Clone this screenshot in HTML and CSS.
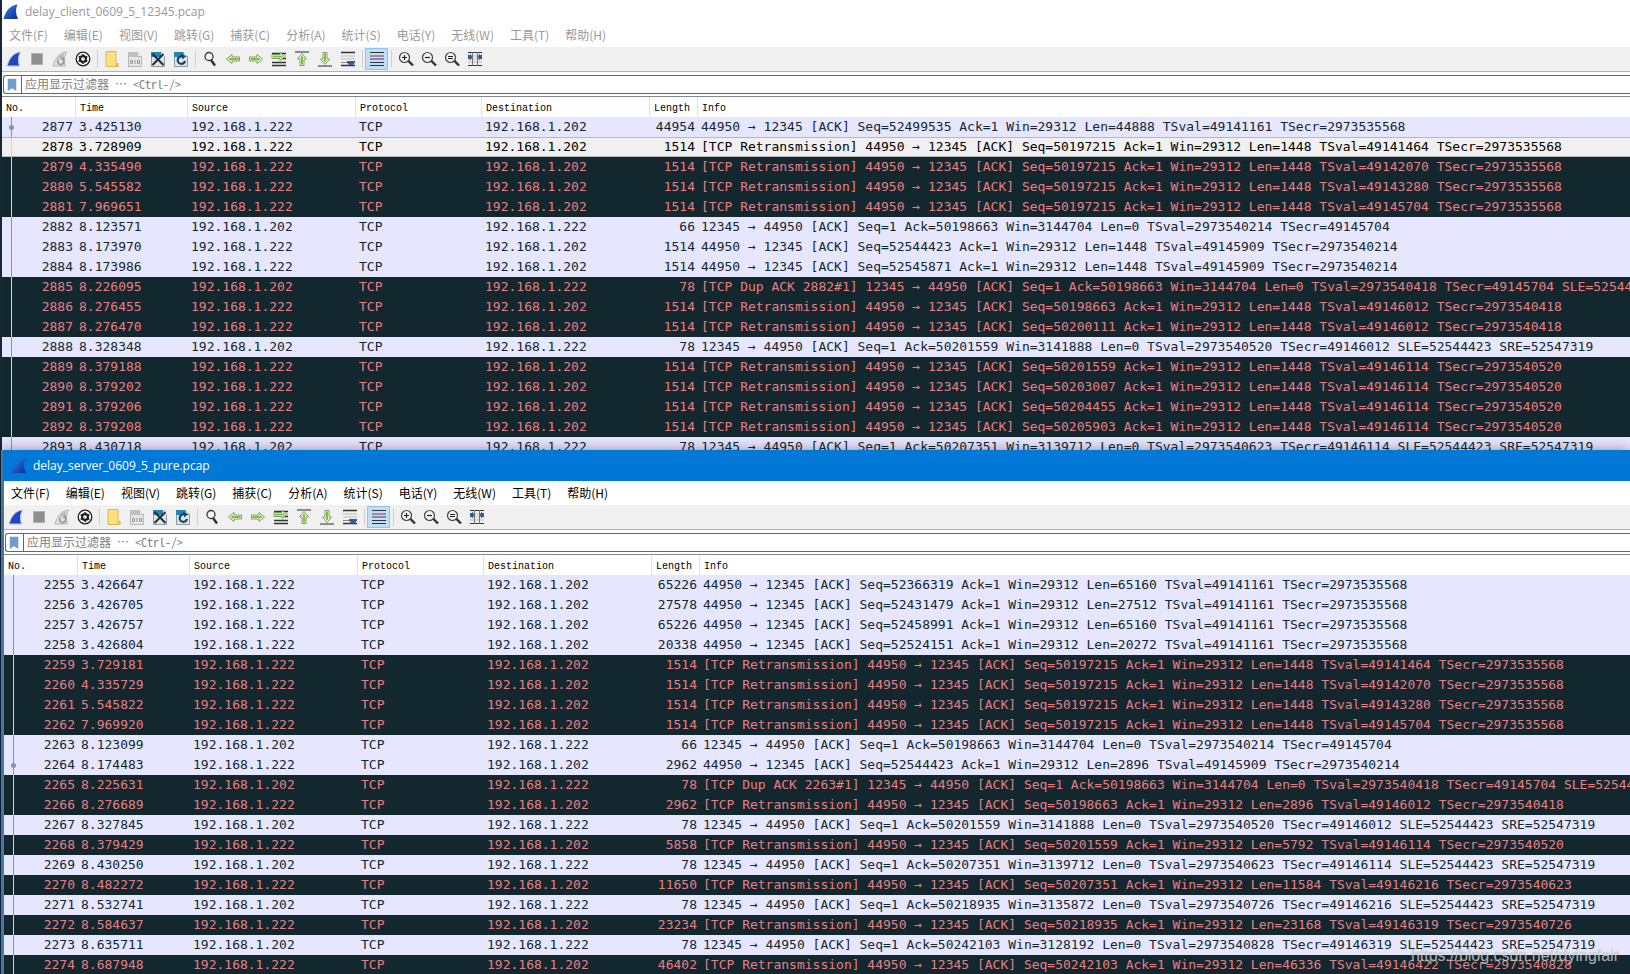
FILE: index.html
```html
<!DOCTYPE html>
<html lang="zh-CN">

<head>
    <meta charset="UTF-8">
    <meta name="viewport" content="width=device-width, initial-scale=1.0">
    <title>delay_server_0609_5_pure.pcap</title>
    <link rel="stylesheet" href="styles.css">
</head>

<body>
    <svg class="sprite" aria-hidden="true">
        <defs>
            <linearGradient id="fin-blue" x1="0" y1="0" x2="1" y2="1">
                <stop offset="0" stop-color="#5d9be8" />
                <stop offset="0.5" stop-color="#1c56c4" />
                <stop offset="1" stop-color="#0b2f8c" />
            </linearGradient>
        </defs>
        <symbol id="i-logo" viewBox="0 0 16 16"><path d="M0.5 15C3 6 7 1.500 14.500 0.500C12.300 5 12.500 10 15 15Z" fill="url(#fin-blue)" /></symbol>
        <symbol id="i-start" viewBox="0 0 16 16"><path d="M1 15C3.500 7 7 2 14.500 1C12 6 12 10 13.500 15Z" fill="#2146bd" stroke="#bcc6e6" stroke-width="1" /></symbol>
        <symbol id="i-stop" viewBox="0 0 16 16"><rect x="2" y="2" width="12" height="12" fill="#8f8f8f" /><rect x="2.500" y="2.500" width="11" height="11" fill="none" stroke="#b0b0b0" /></symbol>
        <symbol id="i-restart" viewBox="0 0 16 16"><path d="M1 15C3.500 7 7 2 14.500 1C12 6 12 10 13.500 15Z" fill="#e2e2e2" stroke="#b4b4b4" /><path d="M5 8C7 5 9 3.500 12 2.500L11 7Z" fill="#b8b8b8" /><path d="M6.500 8.500a3 3 0 1 0 4.500 0" fill="none" stroke="#999" stroke-width="1.500" /><path d="M8.500 8.500l3-3 1 4Z" fill="#999" /></symbol>
        <symbol id="i-gear" viewBox="0 0 16 16"><circle cx="8" cy="8" r="6.800" fill="#fff" stroke="#222" stroke-width="1.300" /><circle cx="8" cy="8" r="4" fill="#222" /><path d="M8 3v10M3.700 5.500l8.600 5M3.700 10.500l8.600-5" stroke="#222" stroke-width="1.500" /><circle cx="8" cy="8" r="1.800" fill="#fff" /></symbol>
        <symbol id="i-open" viewBox="0 0 16 16"><path d="M2 0.500h10v12h2v3H2Z" fill="#ffe07c" stroke="#dcb75a" /><path d="M12 12.500v3h2v-3Z" fill="#f5cc61" stroke="#dcb75a" /></symbol>
        <symbol id="i-save" viewBox="0 0 16 16"><path d="M1.500 1.500h9l4 4v10h-13Z" fill="#e6e6e6" stroke="#b6b6b6" /><path d="M1 1h10v5H1Z" fill="#c0c0c0" /><path d="M10.500 1.500v4h4" fill="#f4f4f4" stroke="#b6b6b6" /><path d="M3.500 9.500h2v3h-2ZM8 9v4M10.500 9.500h2v3h-2Z" fill="none" stroke="#999" /></symbol>
        <symbol id="i-close" viewBox="0 0 16 16"><path d="M1.500 1.500h9l4 4v10h-13Z" fill="#dfe5e0" stroke="#8d9ba3" /><path d="M1 1h11v5H1Z" fill="#2384b4" /><path d="M11 1v4h4Z" fill="#eef4f7" /><path d="M2.500 3l11 11M13.500 3l-11 11" stroke="#1f2e36" stroke-width="2" /></symbol>
        <symbol id="i-reload" viewBox="0 0 16 16"><path d="M1.500 1.500h9l4 4v10h-13Z" fill="#dfe5e0" stroke="#8d9ba3" /><path d="M1 1h10v5H1Z" fill="#2384b4" /><path d="M10.500 1.500v4h4" fill="#eef4f7" stroke="#8d9ba3" /><path d="M9 5.500a3.700 3.700 0 1 0 3 4.500" fill="none" stroke="#173f72" stroke-width="2.200" /><path d="M8 2.500l5 2.500-3.500 3.500Z" fill="#173f72" /></symbol>
        <symbol id="i-find" viewBox="0 0 16 16"><circle cx="7" cy="5.500" r="4" fill="#f5f5f5" stroke="#3a3a3a" stroke-width="1.300" /><path d="M9 9l4 5.500" stroke="#2f2f2f" stroke-width="2.400" /></symbol>
        <symbol id="i-left" viewBox="0 0 16 16"><path d="M1.500 8l5.500-4.500v2.500h7.500v4H7v2.500Z" fill="#fff" stroke="#7d9a66" /><path d="M3.500 8l2.500-2v1h7.500v2H6v1Z" fill="#78c52c" /></symbol>
        <symbol id="i-right" viewBox="0 0 16 16"><path d="M14.500 8l-5.500-4.500v2.500H1.500v4H9v2.500Z" fill="#fff" stroke="#7d9a66" /><path d="M12.500 8l-2.500-2v1H2.500v2H10v1Z" fill="#78c52c" /></symbol>
        <symbol id="i-goto" viewBox="0 0 16 16"><path d="M1 2.500h14M8 7.500h7M1 11.500h14M1 14.500h14" stroke="#333" stroke-width="1.300" /><path d="M11 5h4" stroke="#e8d44d" stroke-width="2" /><path d="M13.500 5.500L9 1.500v2H1v4h8v2Z" fill="#fff" stroke="#7d9a66" /><path d="M12 5.500l-2-1.500v.5H2v2h8V7Z" fill="#78c52c" /></symbol>
        <symbol id="i-top" viewBox="0 0 16 16"><path d="M1 1h14" stroke="#555" stroke-width="1.300" /><path d="M8 2.500l4.500 5.500H10v6.500H6V8H3.500Z" fill="#fff" stroke="#7d9a66" /><path d="M8 4.500L10 7H9v6.500H7V7H6Z" fill="#78c52c" /></symbol>
        <symbol id="i-bottom" viewBox="0 0 16 16"><path d="M1 15h14" stroke="#555" stroke-width="1.300" /><path d="M8 13.500L12.500 8H10V1.500H6V8H3.500Z" fill="#fff" stroke="#7d9a66" /><path d="M8 11.500L10 9H9V2.500H7V9H6Z" fill="#78c52c" /></symbol>
        <symbol id="i-scroll" viewBox="0 0 16 16"><path d="M1 1.500h14M1 14.500h14" stroke="#333" stroke-width="1.300" /><path d="M1 5h14M1 8h14" stroke="#b5bfb0" /><path d="M1 11.500h7" stroke="#888" /><path d="M7 10h8v1.500l-2.500 3h-3L7 11.500Z" fill="#315b9b" /></symbol>
        <symbol id="i-color" viewBox="0 0 16 16"><path d="M1 1.500h14M1 11.500h14M1 14.500h14" stroke="#333" /><path d="M1 5h14" stroke="#c03b4c" stroke-width="1.200" /><path d="M1 8h14" stroke="#4355a8" stroke-width="1.200" /></symbol>
        <symbol id="i-zoomin" viewBox="0 0 16 16"><path d="M10 9.500l5 5" stroke="#333" stroke-width="2.400" /><circle cx="6.500" cy="6.500" r="5" fill="#f3f3f3" stroke="#444" stroke-width="1.200" /><path d="M4 6.500h5M6.500 4v5" stroke="#222" stroke-width="1.200" /></symbol>
        <symbol id="i-zoomout" viewBox="0 0 16 16"><path d="M10 9.500l5 5" stroke="#333" stroke-width="2.400" /><circle cx="6.500" cy="6.500" r="5" fill="#f3f3f3" stroke="#444" stroke-width="1.200" /><path d="M4 6.500h5" stroke="#222" stroke-width="1.200" /></symbol>
        <symbol id="i-zoomone" viewBox="0 0 16 16"><path d="M10 9.500l5 5" stroke="#333" stroke-width="2.400" /><circle cx="6.500" cy="6.500" r="5" fill="#f3f3f3" stroke="#444" stroke-width="1.200" /><path d="M4 5.500h5M4 7.500h5" stroke="#222" /></symbol>
        <symbol id="i-resize" viewBox="0 0 16 16"><path d="M1 1.500h14M1 14.500h14" stroke="#333" /><path d="M1 5h14M1 8h14M1 11h14" stroke="#b5bfb0" /><path d="M5.500 1v14M10.500 1v14" stroke="#777" /><path d="M1 4h2V2.500L5.500 6 3 9.500V8H1ZM15 4h-2V2.500L10.500 6 13 9.500V8h2Z" fill="#315b9b" /></symbol>
    </svg>

    <main class="desktop">
        <section class="window client">
            <header class="titlebar">
                <svg class="logo"><use href="#i-logo" /></svg>
                <h1>delay_client_0609_5_12345.pcap</h1>
            </header>
            <table class="packets" id="client-packets"></table>
        </section>

        <section class="window server">
            <header class="titlebar">
                <svg class="logo"><use href="#i-logo" /></svg>
                <h1>delay_server_0609_5_pure.pcap</h1>
            </header>
            <table class="packets" id="server-packets"></table>
        </section>

        <div class="watermark">https://blog.csdn.net/dyingfair</div>
    </main>

    <script src="script.js"></script>
</body>

</html>
```
FILE: styles.css
```css
* {
    padding: 0;
    margin: 0;
    box-sizing: border-box;
}

body {
    background-color: #14283a;
    font-family: "Open Sans", "Noto Sans CJK SC", sans-serif;
    font-size: 12px;
}

.sprite {
    position: absolute;
    width: 0;
    height: 0;
}

.desktop {
    position: relative;
    display: flex;
    flex-direction: column;
    height: 100vh;
    overflow: hidden;
}

.window {
    background-color: #fff;
    overflow: hidden;
}

.client {
    flex: 0 0 450px;
    margin-left: 2px;
    color: #999;
}

.server {
    flex: 1 0 0;
    position: relative;
    border-left: 3px solid #4477a3;
    margin-left: 1px;
    color: #000;
    overflow: visible;
    box-shadow: 0 0 12px rgba(0, 0, 0, 0.4);
}

.titlebar {
    display: flex;
    align-items: center;
    gap: 6px;
    height: 23px;
    padding-left: 1px;
}

.server .titlebar {
    height: 31px;
    padding-left: 8px;
    margin-left: -1px;
    background-color: #0078d7;
    color: #fff;
}

.titlebar h1 {
    font-size: 12px;
    font-weight: normal;
}

.logo {
    width: 16px;
    height: 16px;
}

.menu {
    display: flex;
    gap: 1px;
    height: 24px;
}

.menu button {
    padding: 0 8px 2px 7px;
    border: none;
    background: none;
    color: inherit;
    font: 12px "Noto Sans CJK SC", sans-serif;
    white-space: nowrap;
}

.toolbar {
    display: flex;
    align-items: center;
    height: 25px;
    background-color: #f0f0f0;
    border-bottom: 1px solid #b0b0b0;
}

.toolbar button {
    display: flex;
    align-items: center;
    justify-content: center;
    width: 23px;
    height: 22px;
    border: 1px solid transparent;
    background: none;
}

.toolbar button.active {
    background-color: #bfdff7;
    border-color: #8fc4ee;
}

.toolbar svg {
    flex: none;
    width: 16px;
    height: 16px;
}

.sep {
    width: 1px;
    height: 18px;
    margin: 0 2px 0 3px;
    background-color: #d0d0d0;
}

.filter {
    display: flex;
    align-items: center;
    height: 19px;
    margin: 3px 0 2px 1px;
    border: 1px solid #666;
    border-right: none;
    border-radius: 3px 0 0 3px;
}

.filter svg {
    flex: none;
    width: 18px;
    height: 17px;
    border-right: 1px solid #666;
}

.filter input {
    flex: 1;
    min-width: 0;
    height: 17px;
    padding: 0 0 2px 3px;
    border: none;
    outline: none;
    background: none;
    font: 12px "Noto Sans Mono CJK SC", "Noto Sans CJK SC", monospace;
}

.filter input::placeholder {
    color: #808080;
}

.packets {
    width: 100%;
    table-layout: fixed;
    border-collapse: separate;
    border-spacing: 0;
    border-top: 1px solid #828790;
    font-family: "DejaVu Sans Mono", monospace;
    font-size: 13px;
    line-height: 20px;
}

.packets .no { width: 74px; }
.packets .time { width: 112px; }
.packets .source { width: 168px; }
.packets .protocol { width: 126px; }
.packets .destination { width: 168px; }
.packets .length { width: 48px; }

.packets th,
.packets td {
    height: 20px;
    padding: 0 3px;
    overflow: hidden;
    text-align: left;
    white-space: nowrap;
}

.packets th {
    padding: 3px 0 0 4px;
    background-color: #fff;
    border-right: 1px solid #e2e2e2;
    color: #000;
    font-family: "Liberation Mono", monospace;
    font-size: 10px;
    font-weight: normal;
    line-height: 17px;
}

.packets th:last-child {
    border-right: none;
}

.packets td:nth-child(1),
.packets td:nth-child(6) {
    text-align: right;
}

.packets td:nth-child(1) {
    position: relative;
}

.packets td:last-child {
    padding-right: 0;
}

.ack {
    background-color: #e7e6ff;
    color: #12272e;
}

.bad {
    background-color: #12272e;
    color: #e87f84;
}

.selected {
    background-color: #f0f0f0;
    color: #000;
}

.packets .selected td {
    line-height: 18px;
    border-top: 1px solid #b8b8b8;
    border-bottom: 1px solid #b8b8b8;
}

/* conversation line beside the packet numbers */
.packets td:nth-child(1)::before {
    content: "";
    position: absolute;
    left: 9px;
    top: 0;
    bottom: 0;
    width: 1px;
    background-color: #8c93a8;
}

.packets .bad td:nth-child(1)::before,
.packets .selected td:nth-child(1)::before {
    background-color: #e8cccd;
}

.packets .related td:nth-child(1)::after {
    content: "";
    position: absolute;
    left: 7px;
    top: 8px;
    width: 5px;
    height: 5px;
    border-radius: 50%;
    background-color: #8c93a8;
}

.watermark {
    position: absolute;
    right: 11px;
    bottom: 8px;
    color: rgba(255, 255, 255, 0.6);
    font: 16px/20px "Liberation Sans", sans-serif;
    text-shadow: 0 0 1px rgba(80, 80, 80, 0.6);
}
```
FILE: script.js
```js
const menuItems = ['文件(F)', '编辑(E)', '视图(V)', '跳转(G)', '捕获(C)', '分析(A)', '统计(S)', '电话(Y)', '无线(W)', '工具(T)', '帮助(H)'];

const tools = ['start', 'stop', 'restart', 'gear', '|', 'open', 'save', 'close', 'reload', '|',
    'find', 'left', 'right', 'goto', 'top', 'bottom', 'scroll', '|', 'color', '|',
    'zoomin', 'zoomout', 'zoomone', 'resize'];

const columns = ['No.', 'Time', 'Source', 'Protocol', 'Destination', 'Length', 'Info'];

const C = '192.168.1.222';
const S = '192.168.1.202';
const OUT = '44950 → 12345 [ACK] ';
const IN = '12345 → 44950 [ACK] ';
const RE = '[TCP Retransmission] ' + OUT;
const SACK = ' SLE=52544423 SRE=52547319';

// [row class, number, time, source, length, info]
const clientPackets = [
    ['ack related', 2877, '3.425130', C, 44954, OUT + 'Seq=52499535 Ack=1 Win=29312 Len=44888 TSval=49141161 TSecr=2973535568'],
    ['selected', 2878, '3.728909', C, 1514, RE + 'Seq=50197215 Ack=1 Win=29312 Len=1448 TSval=49141464 TSecr=2973535568'],
    ['bad', 2879, '4.335490', C, 1514, RE + 'Seq=50197215 Ack=1 Win=29312 Len=1448 TSval=49142070 TSecr=2973535568'],
    ['bad', 2880, '5.545582', C, 1514, RE + 'Seq=50197215 Ack=1 Win=29312 Len=1448 TSval=49143280 TSecr=2973535568'],
    ['bad', 2881, '7.969651', C, 1514, RE + 'Seq=50197215 Ack=1 Win=29312 Len=1448 TSval=49145704 TSecr=2973535568'],
    ['ack', 2882, '8.123571', S, 66, IN + 'Seq=1 Ack=50198663 Win=3144704 Len=0 TSval=2973540214 TSecr=49145704'],
    ['ack', 2883, '8.173970', C, 1514, OUT + 'Seq=52544423 Ack=1 Win=29312 Len=1448 TSval=49145909 TSecr=2973540214'],
    ['ack', 2884, '8.173986', C, 1514, OUT + 'Seq=52545871 Ack=1 Win=29312 Len=1448 TSval=49145909 TSecr=2973540214'],
    ['bad', 2885, '8.226095', S, 78, '[TCP Dup ACK 2882#1] ' + IN + 'Seq=1 Ack=50198663 Win=3144704 Len=0 TSval=2973540418 TSecr=49145704' + SACK],
    ['bad', 2886, '8.276455', C, 1514, RE + 'Seq=50198663 Ack=1 Win=29312 Len=1448 TSval=49146012 TSecr=2973540418'],
    ['bad', 2887, '8.276470', C, 1514, RE + 'Seq=50200111 Ack=1 Win=29312 Len=1448 TSval=49146012 TSecr=2973540418'],
    ['ack', 2888, '8.328348', S, 78, IN + 'Seq=1 Ack=50201559 Win=3141888 Len=0 TSval=2973540520 TSecr=49146012' + SACK],
    ['bad', 2889, '8.379188', C, 1514, RE + 'Seq=50201559 Ack=1 Win=29312 Len=1448 TSval=49146114 TSecr=2973540520'],
    ['bad', 2890, '8.379202', C, 1514, RE + 'Seq=50203007 Ack=1 Win=29312 Len=1448 TSval=49146114 TSecr=2973540520'],
    ['bad', 2891, '8.379206', C, 1514, RE + 'Seq=50204455 Ack=1 Win=29312 Len=1448 TSval=49146114 TSecr=2973540520'],
    ['bad', 2892, '8.379208', C, 1514, RE + 'Seq=50205903 Ack=1 Win=29312 Len=1448 TSval=49146114 TSecr=2973540520'],
    ['ack', 2893, '8.430718', S, 78, IN + 'Seq=1 Ack=50207351 Win=3139712 Len=0 TSval=2973540623 TSecr=49146114' + SACK]
];

const serverPackets = [
    ['ack', 2255, '3.426647', C, 65226, OUT + 'Seq=52366319 Ack=1 Win=29312 Len=65160 TSval=49141161 TSecr=2973535568'],
    ['ack', 2256, '3.426705', C, 27578, OUT + 'Seq=52431479 Ack=1 Win=29312 Len=27512 TSval=49141161 TSecr=2973535568'],
    ['ack', 2257, '3.426757', C, 65226, OUT + 'Seq=52458991 Ack=1 Win=29312 Len=65160 TSval=49141161 TSecr=2973535568'],
    ['ack', 2258, '3.426804', C, 20338, OUT + 'Seq=52524151 Ack=1 Win=29312 Len=20272 TSval=49141161 TSecr=2973535568'],
    ['bad', 2259, '3.729181', C, 1514, RE + 'Seq=50197215 Ack=1 Win=29312 Len=1448 TSval=49141464 TSecr=2973535568'],
    ['bad', 2260, '4.335729', C, 1514, RE + 'Seq=50197215 Ack=1 Win=29312 Len=1448 TSval=49142070 TSecr=2973535568'],
    ['bad', 2261, '5.545822', C, 1514, RE + 'Seq=50197215 Ack=1 Win=29312 Len=1448 TSval=49143280 TSecr=2973535568'],
    ['bad', 2262, '7.969920', C, 1514, RE + 'Seq=50197215 Ack=1 Win=29312 Len=1448 TSval=49145704 TSecr=2973535568'],
    ['ack', 2263, '8.123099', S, 66, IN + 'Seq=1 Ack=50198663 Win=3144704 Len=0 TSval=2973540214 TSecr=49145704'],
    ['ack related', 2264, '8.174483', C, 2962, OUT + 'Seq=52544423 Ack=1 Win=29312 Len=2896 TSval=49145909 TSecr=2973540214'],
    ['bad', 2265, '8.225631', S, 78, '[TCP Dup ACK 2263#1] ' + IN + 'Seq=1 Ack=50198663 Win=3144704 Len=0 TSval=2973540418 TSecr=49145704' + SACK],
    ['bad', 2266, '8.276689', C, 2962, RE + 'Seq=50198663 Ack=1 Win=29312 Len=2896 TSval=49146012 TSecr=2973540418'],
    ['ack', 2267, '8.327845', S, 78, IN + 'Seq=1 Ack=50201559 Win=3141888 Len=0 TSval=2973540520 TSecr=49146012' + SACK],
    ['bad', 2268, '8.379429', C, 5858, RE + 'Seq=50201559 Ack=1 Win=29312 Len=5792 TSval=49146114 TSecr=2973540520'],
    ['ack', 2269, '8.430250', S, 78, IN + 'Seq=1 Ack=50207351 Win=3139712 Len=0 TSval=2973540623 TSecr=49146114' + SACK],
    ['bad', 2270, '8.482272', C, 11650, RE + 'Seq=50207351 Ack=1 Win=29312 Len=11584 TSval=49146216 TSecr=2973540623'],
    ['ack', 2271, '8.532741', S, 78, IN + 'Seq=1 Ack=50218935 Win=3135872 Len=0 TSval=2973540726 TSecr=49146216' + SACK],
    ['bad', 2272, '8.584637', C, 23234, RE + 'Seq=50218935 Ack=1 Win=29312 Len=23168 TSval=49146319 TSecr=2973540726'],
    ['ack', 2273, '8.635711', S, 78, IN + 'Seq=1 Ack=50242103 Win=3128192 Len=0 TSval=2973540828 TSecr=49146319' + SACK],
    ['bad', 2274, '8.687948', C, 46402, RE + 'Seq=50242103 Ack=1 Win=29312 Len=46336 TSval=49146422 TSecr=2973540828']
];

function controls() {
    const menu = menuItems.map(item => `<button type="button">${item}</button>`).join('');
    const bar = tools.map(tool => tool === '|'
        ? '<span class="sep"></span>'
        : `<button type="button" aria-label="${tool}"${tool === 'color' ? ' class="active"' : ''}><svg><use href="#i-${tool}"/></svg></button>`
    ).join('');
    return `<nav class="menu">${menu}</nav>
        <div class="toolbar">${bar}</div>
        <label class="filter">
            <svg viewBox="0 0 18 16"><path d="M4 2h9v13l-4.500-3L4 15Z" fill="#6f9bd1"/></svg>
            <input type="text" placeholder="应用显示过滤器 ⋯ &lt;Ctrl-/&gt;" aria-label="应用显示过滤器">
        </label>`;
}

function fillTable(table, packets) {
    table.insertAdjacentHTML('beforebegin', controls());
    const head = columns.map(name => `<th class="${name.toLowerCase().replace('.', '')}">${name}</th>`).join('');
    const rows = packets.map(([type, no, time, source, length, info]) => {
        const cells = [no, time, source, 'TCP', source === C ? S : C, length, info];
        return `<tr class="${type}">${cells.map(cell => `<td>${cell}</td>`).join('')}</tr>`;
    }).join('');
    table.innerHTML = `<thead><tr>${head}</tr></thead><tbody>${rows}</tbody>`;
}

fillTable(document.getElementById('client-packets'), clientPackets);
fillTable(document.getElementById('server-packets'), serverPackets);
```
